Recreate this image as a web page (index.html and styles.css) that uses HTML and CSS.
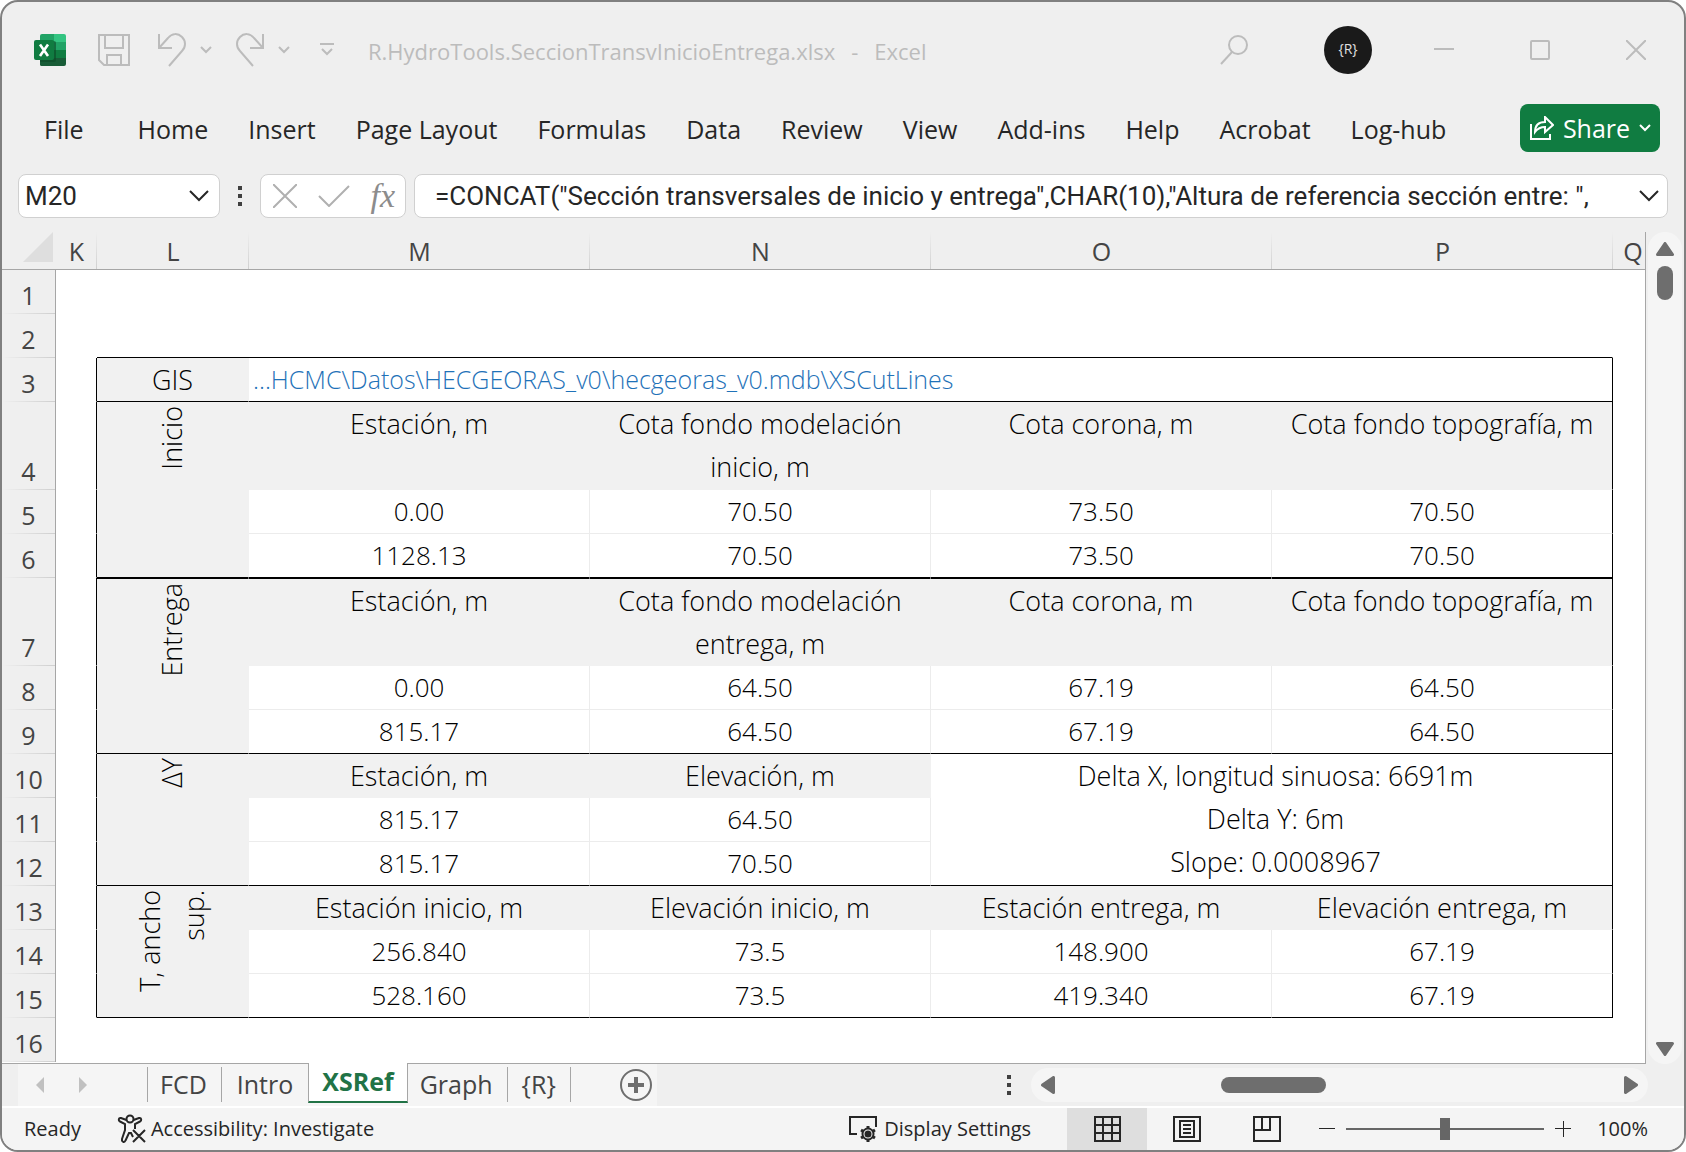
FILE: index.html
```html
<!DOCTYPE html>
<html lang="es">
<head>
<meta charset="utf-8">
<meta name="viewport" content="width=device-width, initial-scale=1">
<title>R.HydroTools.SeccionTransvInicioEntrega.xlsx - Excel</title>
<link rel="stylesheet" href="styles.css">
</head>
<body>
<div class="window">

  <header class="titlebar">
    <svg class="app-icon" width="32" height="32" viewBox="0 0 32 32" aria-hidden="true">
      <path fill="#21a366" d="M8 0h12v8H6V2a2 2 0 0 1 2-2z"/>
      <path fill="#33c481" d="M20 0h10a2 2 0 0 1 2 2v6H20z"/>
      <path fill="#185c37" d="M6 8h14v24H8a2 2 0 0 1-2-2z"/>
      <path fill="#21a366" d="M20 8h12v8H20z"/>
      <path fill="#107c41" d="M6 8h14v16H6zM20 16h12v8H20z"/>
      <path fill="#185c37" d="M6 24h26v6a2 2 0 0 1-2 2H8a2 2 0 0 1-2-2z"/>
      <path fill="#0b4a26" opacity=".6" d="M6 7h14a2 2 0 0 1 2 2v17a2 2 0 0 1-2 2H6z"/>
      <rect y="6" width="20" height="20" rx="2" fill="#107c41"/>
      <path stroke="#fff" stroke-width="2.6" fill="none" d="M6 10.500l8 11.500M14 10.500L6 22"/>
    </svg>
    <button class="plain save" type="button" aria-label="Save">
      <svg width="32" height="32" viewBox="0 0 32 32"><path d="M1 1h30v30H6l-5-5zM7 1v13h18V1M9 31V21h14v10"/></svg>
    </button>
    <div class="split">
      <button class="plain" type="button" aria-label="Undo">
        <svg width="28" height="34" viewBox="0 0 28 34"><path d="M1 1v14h13M1 15L10 5C14 0 20 0 24 4s4 10 0 14L11 33"/></svg>
      </button>
      <button class="plain" type="button" aria-label="Undo list">
        <svg width="12" height="8" viewBox="0 0 12 8"><path d="M1 1l5 5 5-5"/></svg>
      </button>
    </div>
    <div class="split">
      <button class="plain" type="button" aria-label="Redo">
        <svg width="28" height="34" viewBox="0 0 28 34"><path d="M27 1v14H14M27 15L18 5C14 0 8 0 4 4s-4 10 0 14l13 15"/></svg>
      </button>
      <button class="plain" type="button" aria-label="Redo list">
        <svg width="12" height="8" viewBox="0 0 12 8"><path d="M1 1l5 5 5-5"/></svg>
      </button>
    </div>
    <button class="plain customize" type="button" aria-label="Customize toolbar">
      <svg width="14" height="14" viewBox="0 0 14 14"><path d="M0 1h14M2 6l5 5 5-5"/></svg>
    </button>
    <h1 class="title"><span>R.HydroTools.SeccionTransvInicioEntrega.xlsx</span><span>-</span><span>Excel</span></h1>
    <div class="caption">
      <button class="plain search" type="button" aria-label="Search">
        <svg width="28" height="30" viewBox="0 0 28 30"><circle cx="18" cy="10" r="9"/><path d="M12 17L1 29"/></svg>
      </button>
      <button class="plain" type="button" aria-label="Account"><span class="avatar">{R}</span></button>
      <button class="plain" type="button" aria-label="Minimize">
        <svg width="20" height="20" viewBox="0 0 20 20"><path d="M0 9h20"/></svg>
      </button>
      <button class="plain" type="button" aria-label="Maximize">
        <svg width="20" height="20" viewBox="0 0 20 20"><rect x="1" y="1" width="18" height="18" rx="1"/></svg>
      </button>
      <button class="plain" type="button" aria-label="Close">
        <svg width="20" height="20" viewBox="0 0 20 20"><path d="M0 0l20 20M20 0L0 20"/></svg>
      </button>
    </div>
  </header>

  <nav class="ribbon" aria-label="Ribbon">
    <button class="plain file" type="button">File</button>
    <button class="plain" type="button">Home</button>
    <button class="plain" type="button">Insert</button>
    <button class="plain" type="button">Page Layout</button>
    <button class="plain" type="button">Formulas</button>
    <button class="plain" type="button">Data</button>
    <button class="plain" type="button">Review</button>
    <button class="plain" type="button">View</button>
    <button class="plain" type="button">Add-ins</button>
    <button class="plain" type="button">Help</button>
    <button class="plain" type="button">Acrobat</button>
    <button class="plain" type="button">Log-hub</button>
    <button class="share" type="button">
      <svg width="24" height="24" viewBox="0 0 24 24"><path d="M1 8v15h19v-5M5 16c0-7 4-10 10-10V1l8 8-8 7v-5c-4 0-7 1-10 5z"/></svg>
      Share
      <svg width="12" height="8" viewBox="0 0 12 8"><path d="M1 1l5 5 5-5"/></svg>
    </button>
  </nav>

  <div class="formula-bar">
    <div class="box name-box">
      <input type="text" value="M20" aria-label="Name box">
      <button class="plain" type="button" aria-label="Names">
        <svg width="20" height="12" viewBox="0 0 20 12"><path d="M1 1l9 9 9-9"/></svg>
      </button>
    </div>
    <span class="dots"><i></i><i></i><i></i></span>
    <div class="box tools">
      <button class="plain" type="button" aria-label="Cancel">
        <svg width="24" height="24" viewBox="0 0 24 24"><path d="M0 0l24 24M24 0L0 24"/></svg>
      </button>
      <button class="plain" type="button" aria-label="Enter">
        <svg width="32" height="22" viewBox="0 0 32 22"><path d="M1 11l10 10L31 1"/></svg>
      </button>
      <button class="plain fx" type="button" aria-label="Insert function">fx</button>
    </div>
    <div class="box formula">
      <input type="text" aria-label="Formula" value="=CONCAT(&quot;Sección transversales de inicio y entrega&quot;,CHAR(10),&quot;Altura de referencia sección entre: &quot;,">
      <button class="plain" type="button" aria-label="Expand formula bar">
        <svg width="20" height="12" viewBox="0 0 20 12"><path d="M1 1l9 9 9-9"/></svg>
      </button>
    </div>
  </div>

  <main class="sheet">
    <div class="grid">
    <table>
      <colgroup><col class="c-head"><col class="c-k"><col class="c-l"><col><col><col><col><col class="c-q"></colgroup>
      <thead>
        <tr>
          <td class="corner"><svg width="30" height="30" viewBox="0 0 30 30" aria-hidden="true"><path d="M30 0v30H0z"/></svg></td>
          <th scope="col">K</th><th scope="col">L</th><th scope="col">M</th><th scope="col">N</th><th scope="col">O</th><th scope="col">P</th><th scope="col" class="q">Q</th>
        </tr>
      </thead>
      <tbody>
        <tr><th scope="row">1</th><td colspan="7"></td></tr>
        <tr><th scope="row">2</th><td></td><td colspan="5" class="end"></td><td></td></tr>
        <tr><th scope="row">3</th><td class="edge"></td><td class="fill end">GIS</td><td colspan="4" class="path end edge"><a href="#xscutlines">...HCMC\Datos\HECGEORAS_v0\hecgeoras_v0.mdb\XSCutLines</a></td><td></td></tr>

        <tr class="tall"><th scope="row">4</th><td class="edge"></td><td rowspan="3" class="fill side end"><span>Inicio</span></td><td class="fill">Estación, m</td><td class="fill">Cota fondo modelación inicio, m</td><td class="fill">Cota corona, m</td><td class="fill edge">Cota fondo topografía, m</td><td></td></tr>
        <tr><th scope="row">5</th><td class="edge"></td><td class="num">0.00</td><td class="num">70.50</td><td class="num">73.50</td><td class="num edge">70.50</td><td></td></tr>
        <tr><th scope="row">6</th><td class="edge"></td><td class="num end">1128.13</td><td class="num end">70.50</td><td class="num end">73.50</td><td class="num end edge">70.50</td><td></td></tr>

        <tr class="tall"><th scope="row">7</th><td class="edge"></td><td rowspan="3" class="fill side end top"><span>Entrega</span></td><td class="fill top">Estación, m</td><td class="fill top">Cota fondo modelación entrega, m</td><td class="fill top">Cota corona, m</td><td class="fill top edge">Cota fondo topografía, m</td><td></td></tr>
        <tr><th scope="row">8</th><td class="edge"></td><td class="num">0.00</td><td class="num">64.50</td><td class="num">67.19</td><td class="num edge">64.50</td><td></td></tr>
        <tr><th scope="row">9</th><td class="edge"></td><td class="num end">815.17</td><td class="num end">64.50</td><td class="num end">67.19</td><td class="num end edge">64.50</td><td></td></tr>

        <tr><th scope="row">10</th><td class="edge"></td><td rowspan="3" class="fill side end"><span>ΔY</span></td><td class="fill">Estación, m</td><td class="fill">Elevación, m</td><td colspan="2" rowspan="3" class="summary end edge">Delta X, longitud sinuosa: 6691m<br>Delta Y: 6m<br>Slope: 0.0008967</td><td></td></tr>
        <tr><th scope="row">11</th><td class="edge"></td><td class="num">815.17</td><td class="num">64.50</td><td></td></tr>
        <tr><th scope="row">12</th><td class="edge"></td><td class="num end">815.17</td><td class="num end">70.50</td><td></td></tr>

        <tr><th scope="row">13</th><td class="edge"></td><td rowspan="3" class="fill side end"><span>T, ancho<br>sup.</span></td><td class="fill">Estación inicio, m</td><td class="fill">Elevación inicio, m</td><td class="fill">Estación entrega, m</td><td class="fill edge">Elevación entrega, m</td><td></td></tr>
        <tr><th scope="row">14</th><td class="edge"></td><td class="num">256.840</td><td class="num">73.5</td><td class="num">148.900</td><td class="num edge">67.19</td><td></td></tr>
        <tr><th scope="row">15</th><td class="edge"></td><td class="num end">528.160</td><td class="num end">73.5</td><td class="num end">419.340</td><td class="num end edge">67.19</td><td></td></tr>
        <tr><th scope="row">16</th><td colspan="7"></td></tr>
      </tbody>
    </table>
    </div>
    <div class="vscroll">
      <svg width="18" height="14" viewBox="0 0 18 14" aria-hidden="true"><path d="M9 1.500L16.500 12.500h-15z"/></svg>
      <span class="thumb"></span>
      <svg class="last" width="18" height="14" viewBox="0 0 18 14" aria-hidden="true"><path d="M9 12.500L1.500 1.500h15z"/></svg>
    </div>
  </main>

  <div class="sheet-bar">
    <div class="tabs">
      <div class="tab-nav">
        <button class="plain" type="button" aria-label="Previous sheet"><svg width="8" height="16" viewBox="0 0 8 16"><path d="M8 0v16L0 8z"/></svg></button>
        <button class="plain" type="button" aria-label="Next sheet"><svg width="8" height="16" viewBox="0 0 8 16"><path d="M0 0v16l8-8z"/></svg></button>
      </div>
      <button class="tab" type="button">FCD</button>
      <button class="tab" type="button">Intro</button>
      <button class="tab active" type="button">XSRef</button>
      <button class="tab" type="button">Graph</button>
      <button class="tab last" type="button">{R}</button>
      <button class="plain add" type="button" aria-label="New sheet">
        <svg width="32" height="32" viewBox="0 0 32 32"><circle cx="16" cy="16" r="15" stroke-width="2"/><path stroke-width="4" d="M16 8v16M8 16h16"/></svg>
      </button>
    </div>
    <span class="dots"><i></i><i></i><i></i></span>
    <div class="hscroll">
      <svg width="14" height="18" viewBox="0 0 14 18" aria-hidden="true"><path d="M1.500 9L12.500 1.500v15z"/></svg>
      <span class="thumb"></span>
      <svg width="14" height="18" viewBox="0 0 14 18" aria-hidden="true"><path d="M12.500 9L1.500 16.500v-15z"/></svg>
    </div>
  </div>

  <footer class="status">
    <span>Ready</span>
    <button class="plain access" type="button">
      <svg width="30" height="30" viewBox="0 0 30 30"><circle cx="13" cy="5" r="3.500"/><path d="M9.500 6L4 4C1.500 3.500 1 6.500 3 7.500l5 2.500v6L5 25c-.5 3 2.500 4 3.500 1.500L12 19h2l2 4M16.500 6L22 4c2.500-.5 3 2.500 1 3.500L18 10v5M16 16l12 12M28 16L16 28"/></svg>
      Accessibility: Investigate
    </button>
    <button class="plain display" type="button">
      <svg width="30" height="30" viewBox="0 0 30 30"><path d="M9 20H2V3h26v10"/><circle cx="20" cy="20" r="5.500"/><circle class="solid" cx="20" cy="20" r="2.500"/><path stroke-width="3" d="M20 12v3M20 25v3M13 16l2.500 1.500M24.500 22.500L27 24M13 24l2.500-1.500M24.500 17.500L27 16"/></svg>
      Display Settings
    </button>
    <div class="views">
      <button class="plain on" type="button" aria-label="Normal">
        <svg width="28" height="28" viewBox="0 0 28 28"><path d="M2 2h25v24H2zM10 2v24M19 2v24M2 10h25M2 18h25"/></svg>
      </button>
      <button class="plain" type="button" aria-label="Page layout">
        <svg width="28" height="28" viewBox="0 0 28 28"><path d="M1 2h26v24H1zM7 6h14v16H7zM10 10h8M10 14h8M10 18h8"/></svg>
      </button>
      <button class="plain" type="button" aria-label="Page break preview">
        <svg width="28" height="28" viewBox="0 0 28 28"><path d="M1 2h26v24H1zM1 15h16V2M9 2v13"/></svg>
      </button>
    </div>
    <div class="zoom">
      <button class="plain" type="button" aria-label="Zoom out"><svg width="16" height="16" viewBox="0 0 16 16"><path d="M0 7.500h16"/></svg></button>
      <input type="range" min="0" max="100" value="50" aria-label="Zoom">
      <button class="plain" type="button" aria-label="Zoom in"><svg width="16" height="16" viewBox="0 0 16 16"><path d="M0 7.500h16M8.500 0v16"/></svg></button>
      <span class="percent">100%</span>
    </div>
  </footer>
</div>
</body>
</html>
```
FILE: styles.css
```css
* { box-sizing: border-box; }

body {
  margin: 0;
  background: #fff;
  color: #262626;
  font: 25px/34px "Open Sans", "Noto Sans", sans-serif;
}

.window {
  display: flex;
  flex-direction: column;
  min-height: 100vh;
  border: 2px solid #808080;
  border-radius: 18px;
  background: #efefef;
  overflow: hidden;
}

svg {
  display: block;
  flex: none;
  fill: none;
  stroke: currentColor;
  stroke-width: 2;
}

.plain {
  display: flex;
  align-items: center;
  justify-content: center;
  padding: 0;
  border: 0;
  background: none;
  color: inherit;
  font: inherit;
  white-space: nowrap;
}

/* Title bar */
.titlebar {
  display: flex;
  align-items: center;
  gap: 24px;
  height: 96px;
  padding-left: 32px;
  color: #bcbcbc;
}
.app-icon { margin-right: 8px; stroke: none; }
.save { margin-right: 4px; }
.split { display: flex; align-items: center; gap: 14px; }
.customize { margin-left: 6px; }
.title {
  display: flex;
  gap: 16px;
  margin: 0 0 0 10px;
  padding-top: 2px;
  font-size: 22px;
  font-weight: 400;
  white-space: nowrap;
}
.caption { display: flex; margin-left: auto; }
.caption .plain { width: 96px; }
.caption .search { margin-right: 18px; }
.avatar {
  width: 48px;
  height: 48px;
  border-radius: 50%;
  background: #1a1a1a;
  color: #e0e0e0;
  font-size: 14px;
  line-height: 46px;
}

/* Ribbon */
.ribbon {
  display: flex;
  align-items: center;
  gap: 40px;
  height: 60px;
  padding: 0 24px 0 42px;
}
.ribbon .plain { padding-top: 2px; }
.ribbon .file { margin-right: 14px; }
.share {
  display: flex;
  align-items: center;
  justify-content: space-between;
  width: 140px;
  height: 48px;
  margin-left: auto;
  padding: 0 9px 0 10px;
  border: 0;
  border-radius: 8px;
  background: #107c41;
  color: #fff;
  font: inherit;
}

/* Formula bar */
.formula-bar {
  display: flex;
  align-items: center;
  padding: 16px 16px 14px;
  font-family: Roboto, "Liberation Sans", sans-serif;
  font-size: 26px;
}
.box {
  display: flex;
  align-items: center;
  height: 44px;
  border: 1px solid #d0d0d0;
  border-radius: 8px;
  background: #fff;
}
.box input {
  flex: 1;
  min-width: 0;
  padding: 0;
  border: 0;
  background: none;
  color: #262626;
  font: inherit;
}
.name-box { width: 202px; padding: 0 10px 0 6px; }
.dots { display: flex; flex-direction: column; gap: 4px; margin: 0 18px; }
.dots i { width: 4px; height: 4px; background: #404040; }
.tools {
  justify-content: space-between;
  width: 146px;
  margin-right: 8px;
  padding: 0 10px 0 12px;
  color: #b0b0b0;
}
.fx { color: #8c8c8c; font: italic 34px/34px "Liberation Serif", serif; }
.formula { flex: 1; padding: 0 8px 0 20px; }

/* Grid */
.sheet { display: flex; flex: 1; }
.grid {
  flex: 1;
  border-right: 1px solid #a6a6a6;
  border-bottom: 1px solid #a6a6a6;
  background: #fff;
}
table {
  width: 100%;
  table-layout: fixed;
  border-spacing: 0;
  color: #000;
  font-weight: 300;
  font-size: 27px;
}
.c-head { width: 54px; }
.c-k { width: 41px; }
.c-l { width: 152px; }
.c-q { width: 32px; }

thead tr { height: 38px; }
tbody tr { height: 44px; }
tbody .tall { height: 88px; }

th {
  padding: 0;
  color: #444;
  font-weight: 400;
  font-size: 25px;
  line-height: 34px;
}
thead th,
thead .corner {
  border-bottom: 1px solid #a6a6a6;
  background: linear-gradient(#efefef, #d0d0d0) right / 1px 100% no-repeat #efefef;
}
thead .q { padding-left: 8px; background: #efefef; }
thead .corner { background: #efefef; line-height: 0; }
.corner svg { margin-left: 21px; fill: #dedede; stroke: none; }
tbody th {
  border-right: 1px solid #a6a6a6;
  background: linear-gradient(90deg, #efefef, #cfcfcf) bottom / 100% 1px no-repeat #efefef;
  line-height: 38px;
  vertical-align: bottom;
}

td { padding: 0; line-height: 43px; text-align: center; vertical-align: top; }
tbody td { border: 0 solid transparent; border-width: 0 1px 1px 0; }
.fill { background: #f1f1f1; }
.num { border-color: #ececec; font-size: 26px; }
tbody .top { border-top: 1px solid #000; }
tbody .end { border-bottom-color: #000; }
tbody .edge { border-right-color: #000; }
tbody .path { padding-left: 4px; text-align: left; font-size: 25px; }
.path a { color: #1f72b8; text-decoration: none; }
tbody .summary { padding-left: 8px; }
.side span {
  display: inline-block;
  margin: 4px 2px 0 0;
  line-height: 44px;
  text-align: right;
  vertical-align: top;
  white-space: nowrap;
  writing-mode: vertical-rl;
  transform: rotate(180deg);
}

/* Scroll bars */
.vscroll {
  display: flex;
  flex-direction: column;
  align-items: center;
  gap: 10px;
  width: 34px;
  margin: 0 2px;
  padding: 10px 0 8px;
  border-radius: 17px;
  background: #f5f5f5;
}
.vscroll svg,
.hscroll svg { color: #6e6e6e; fill: currentColor; stroke-width: 3; stroke-linejoin: round; }
.vscroll .last { margin-top: auto; }
.thumb { border-radius: 8px; background: #6e6e6e; }
.vscroll .thumb { width: 16px; height: 34px; }

/* Sheet tabs */
.sheet-bar { display: flex; align-items: center; height: 42px; padding: 0 36px 0 16px; }
.tabs { display: flex; height: 42px; background: #f5f5f5; }
.tab-nav { display: flex; align-items: center; gap: 35px; width: 129px; padding-left: 18px; color: #c0c0c0; }
.tab-nav svg { fill: currentColor; stroke: none; }
.tab {
  height: 35px;
  margin-top: 3px;
  padding: 0 14px 4px 12px;
  border: 0;
  border-left: 1px solid #a6a6a6;
  background: none;
  color: #444;
  font: inherit;
}
.tab:nth-of-type(2) { padding: 0 15px 4px; }
.tab.active {
  position: relative;
  height: 40px;
  margin-top: -1px;
  padding: 0 13px 2px;
  border-right: 1px solid #a6a6a6;
  border-bottom: 2px solid #217346;
  background: #fff;
  color: #217346;
  font-weight: 700;
}
.tab.active + .tab { border-left: 0; }
.tab.last { padding: 0 14px 4px; border-right: 1px solid #a6a6a6; }
.add { padding: 0 5px 0 49px; color: #6e6e6e; }
.sheet-bar .dots { margin-left: auto; margin-right: 20px; }
.hscroll {
  display: flex;
  align-items: center;
  justify-content: space-between;
  width: 617px;
  height: 34px;
  padding: 0 10px;
  border-radius: 17px;
  background: #f5f5f5;
}
.hscroll .thumb { width: 105px; height: 16px; margin-right: 118px; margin-left: auto; }
.hscroll svg:last-child { margin-left: 180px; }

/* Status bar */
.status {
  display: flex;
  align-items: center;
  height: 44px;
  padding: 0 36px 0 22px;
  border-top: 2px solid #fff;
  background: #f4f4f4;
  font-size: 20px;
}
.access { gap: 4px; margin-left: 36px; }
.display { gap: 6px; margin-left: auto; margin-right: 36px; }
.display .solid { fill: currentColor; }
.views { display: flex; align-self: stretch; }
.views .plain { width: 80px; }
.views .on { background: #dedede; }
.zoom { display: flex; align-items: center; margin-left: 12px; }
.zoom svg { stroke-width: 1; }
.zoom input {
  width: 198px;
  height: 22px;
  margin: 0 11px;
  appearance: none;
  background: linear-gradient(#666, #666) center / 100% 2px no-repeat;
}
.zoom input::-webkit-slider-thumb {
  width: 10px;
  height: 22px;
  appearance: none;
  background: #666;
}
.percent { margin-left: 26px; }
```
